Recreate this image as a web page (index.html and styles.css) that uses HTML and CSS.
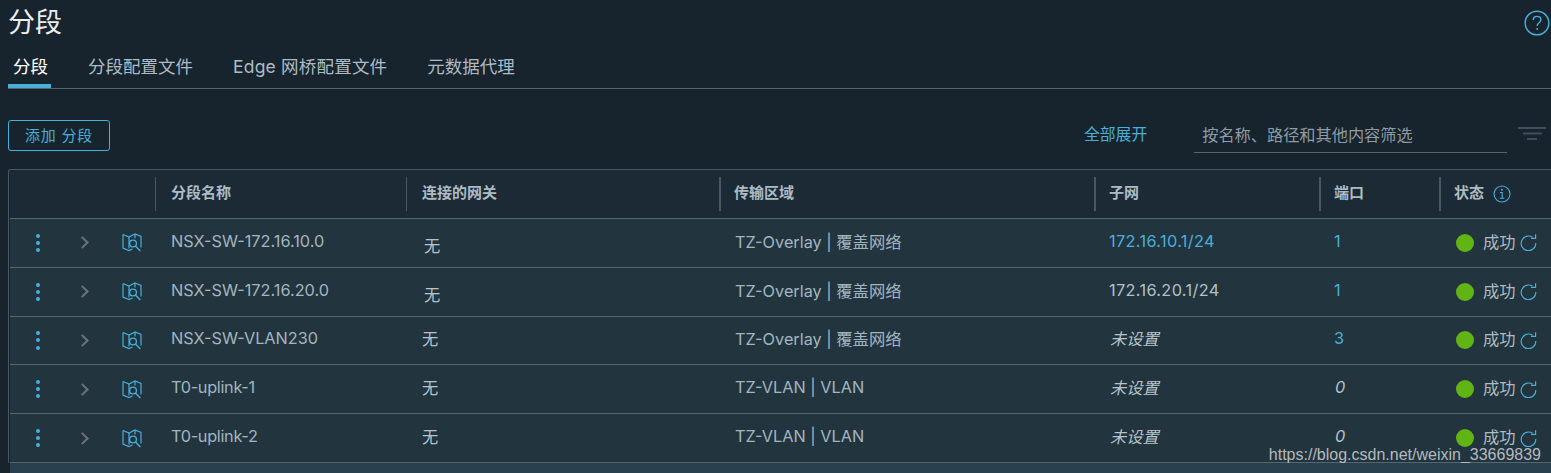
FILE: index.html
```html
<!DOCTYPE html>
<html lang="zh-CN">
<head>
    <meta charset="UTF-8">
    <title>分段</title>
    <link rel="stylesheet" href="styles.css">
</head>
<body>
    <svg class="icon-defs" width="0" height="0">
        <symbol id="map" viewBox="0 0 20 19">
            <path d="M7 15.500 7 4M13 1v4.500" fill="none" stroke="currentColor" stroke-width="1.200"/>
            <path d="M1 1.500 7 4l6-3 6 2.500V14.500M10.500 16 7 17.500 1 15V1.500" fill="none" stroke="currentColor" stroke-width="1.200"/>
            <circle cx="11" cy="10.500" r="3.400" fill="none" stroke="currentColor" stroke-width="1.300"/>
            <path d="m13.400 13 5 5" fill="none" stroke="currentColor" stroke-width="1.400"/>
        </symbol>
        <symbol id="refresh" viewBox="0 0 17 17">
            <path d="M12.600 3.300A7.300 7.300 0 1 0 15.800 9" fill="none" stroke="currentColor" stroke-width="1.200"/>
            <path d="M11 4.300h4.600V0.300" fill="none" stroke="currentColor" stroke-width="1.200"/>
        </symbol>
    </svg>

    <header class="title-bar">
        <h1>分段</h1>
        <svg class="help-icon" width="26" height="26" viewBox="0 0 27 27">
            <circle cx="13.500" cy="13.500" r="12.300" fill="none" stroke="currentColor" stroke-width="1.500"/>
            <path d="M9.600 10.400c0-2.400 1.800-3.800 4-3.800s3.900 1.400 3.900 3.500c0 3.100-3.800 3.200-3.800 6.400" fill="none" stroke="currentColor" stroke-width="1.500"/>
            <circle cx="13.700" cy="19.800" r="1" fill="currentColor"/>
        </svg>
    </header>

    <nav class="tabs">
        <a class="tab active">分段</a>
        <a class="tab">分段配置文件</a>
        <a class="tab wide">Edge 网桥配置文件</a>
        <a class="tab">元数据代理</a>
    </nav>

    <div class="toolbar">
        <button class="add-btn">添加 分段</button>
        <a class="expand-all">全部展开</a>
        <div class="filter-input">按名称、路径和其他内容筛选</div>
        <svg class="filter-icon" width="28" height="13" viewBox="0 0 28 13">
            <path d="M0 1h28M5 6.500h19M9 12h10" stroke="currentColor" stroke-width="2"/>
        </svg>
    </div>

    <div class="datagrid">
        <div class="row head">
            <div></div><div></div><div></div>
            <div class="th">分段名称</div>
            <div class="th">连接的网关</div>
            <div class="th thick">传输区域</div>
            <div class="th thick">子网</div>
            <div class="th thick">端口</div>
            <div class="th thick">状态
                <svg class="info-icon" width="18" height="18" viewBox="0 0 18 18">
                    <circle cx="9" cy="9" r="8" fill="none" stroke="currentColor" stroke-width="1.100"/>
                    <path d="M7 7.500h2.200V13M6.800 13.300h4.400" fill="none" stroke="currentColor" stroke-width="1.100"/>
                    <circle cx="8.800" cy="4.800" r="1" fill="currentColor"/>
                </svg>
            </div>
        </div>

        <div class="row">
            <div class="cell-icon"><span class="dots"><i></i><i></i><i></i></span></div>
            <div class="cell-icon"><span class="chevron"></span></div>
            <div class="cell-icon"><svg class="map-icon"><use href="#map"/></svg></div>
            <div class="td">NSX-SW-172.16.10.0</div>
            <div class="td none shifted">无</div>
            <div class="td">TZ-Overlay | 覆盖网络</div>
            <div class="td link ip">172.16.10.1/24</div>
            <div class="td link">1</div>
            <div class="td status"><span class="dot"></span><span class="status-text">成功</span><svg class="refresh-icon"><use href="#refresh"/></svg></div>
        </div>

        <div class="row">
            <div class="cell-icon"><span class="dots"><i></i><i></i><i></i></span></div>
            <div class="cell-icon"><span class="chevron"></span></div>
            <div class="cell-icon"><svg class="map-icon"><use href="#map"/></svg></div>
            <div class="td">NSX-SW-172.16.20.0</div>
            <div class="td none shifted">无</div>
            <div class="td">TZ-Overlay | 覆盖网络</div>
            <div class="td strong ip">172.16.20.1/24</div>
            <div class="td link">1</div>
            <div class="td status"><span class="dot"></span><span class="status-text">成功</span><svg class="refresh-icon"><use href="#refresh"/></svg></div>
        </div>

        <div class="row">
            <div class="cell-icon"><span class="dots"><i></i><i></i><i></i></span></div>
            <div class="cell-icon"><span class="chevron"></span></div>
            <div class="cell-icon"><svg class="map-icon"><use href="#map"/></svg></div>
            <div class="td">NSX-SW-VLAN230</div>
            <div class="td none">无</div>
            <div class="td">TZ-Overlay | 覆盖网络</div>
            <div class="td unset">未设置</div>
            <div class="td link">3</div>
            <div class="td status"><span class="dot"></span><span class="status-text">成功</span><svg class="refresh-icon"><use href="#refresh"/></svg></div>
        </div>

        <div class="row">
            <div class="cell-icon"><span class="dots"><i></i><i></i><i></i></span></div>
            <div class="cell-icon"><span class="chevron"></span></div>
            <div class="cell-icon"><svg class="map-icon"><use href="#map"/></svg></div>
            <div class="td narrow">T0-uplink-1</div>
            <div class="td none">无</div>
            <div class="td">TZ-VLAN | VLAN</div>
            <div class="td unset">未设置</div>
            <div class="td unset">0</div>
            <div class="td status"><span class="dot"></span><span class="status-text">成功</span><svg class="refresh-icon"><use href="#refresh"/></svg></div>
        </div>

        <div class="row">
            <div class="cell-icon"><span class="dots"><i></i><i></i><i></i></span></div>
            <div class="cell-icon"><span class="chevron"></span></div>
            <div class="cell-icon"><svg class="map-icon"><use href="#map"/></svg></div>
            <div class="td narrow">T0-uplink-2</div>
            <div class="td none">无</div>
            <div class="td">TZ-VLAN | VLAN</div>
            <div class="td unset">未设置</div>
            <div class="td unset">0</div>
            <div class="td status"><span class="dot"></span><span class="status-text">成功</span><svg class="refresh-icon"><use href="#refresh"/></svg></div>
        </div>
    </div>

    <div class="watermark">https://blog.csdn.net/weixin_33669839</div>
</body>
</html>
```

FILE: styles.css
```css
* {
    margin: 0;
    padding: 0;
    box-sizing: border-box;
}

html, body {
    height: 473px;
    overflow: hidden;
}

body {
    background: #17242e;
    color: #adbbc4;
    font-family: Inter, "Noto Sans CJK SC", sans-serif;
    font-size: 16px;
    padding-left: 8px;
    position: relative;
}

.icon-defs {
    position: absolute;
}

/* Title */
.title-bar {
    display: flex;
    justify-content: space-between;
    height: 47px;
    padding-top: 9px;
}

h1 {
    color: #eaedf0;
    font-size: 27px;
    font-weight: 400;
    line-height: 28px;
}

.help-icon {
    color: #49afd9;
    margin: 1px 1px 0 0;
}

/* Tabs */
.tabs {
    display: flex;
    gap: 40px;
    height: 42px;
    border-bottom: 1px solid #56666f;
    margin-bottom: 31px;
}

.tab {
    color: #adbbc4;
    font-size: 17.500px;
    line-height: 40px;
    height: 41px;
}

.tab.wide {
    letter-spacing: 0.200px;
}

.tab.active {
    color: #fff;
    border-bottom: 4px solid #49afd9;
    padding: 0 2px 0 5px;
    width: 43px;
    margin-right: -3px;
    white-space: nowrap;
}

/* Toolbar */
.toolbar {
    display: flex;
    align-items: center;
    height: 33px;
    margin-bottom: 16px;
}

.add-btn {
    align-self: flex-start;
    width: 102px;
    height: 31px;
    padding-bottom: 2px;
    background: none;
    border: 1px solid #49afd9;
    border-radius: 3px;
    color: #49afd9;
    font: inherit;
    font-size: 15px;
    letter-spacing: 0.800px;
}

.expand-all {
    color: #49afd9;
    margin-left: 974px;
    padding-bottom: 6px;
    font-size: 15.800px;
}

.filter-input {
    width: 313px;
    height: 33px;
    margin-left: 47px;
    padding: 2px 8px 0;
    border-bottom: 1px solid #56666f;
    color: #8f9ba3;
    font-size: 16.200px;
}

.filter-icon {
    color: #3f4e58;
    margin: 0 0 7px 11px;
}

/* Data grid */
.datagrid {
    width: 1560px;
    border: 1px solid #485862;
    border-right: none;
    border-bottom: none;
    border-radius: 3px 0 0 0;
    padding-left: 1px;
    background: #17242e;
}

.row {
    display: grid;
    grid-template-columns: 51px 47px 47px 251px 313px 375px 225px 120px 1fr;
    align-items: center;
    height: 48.800px;
    background: #22343d;
    border-bottom: 1px solid #56666f;
}

.row.head {
    background: #1b2a35;
    height: 49px;
}

.th {
    display: flex;
    align-items: center;
    height: 34px;
    padding: 0 0 5px 15px;
    border-left: 1px solid #485862;
    font-size: 15px;
    font-weight: 700;
    color: #adbbc4;
}

.th.thick {
    border-left-width: 2px;
    padding-left: 13px;
}

.info-icon {
    color: #49afd9;
    margin: 5px 0 0 9px;
}

.cell-icon {
    display: flex;
    justify-content: center;
    align-items: center;
}

.td {
    padding: 0 0 4px 16px;
    font-size: 16.300px;
    color: #a3b5c1;
    white-space: nowrap;
}

.td.narrow {
    letter-spacing: -0.300px;
}

.td.link {
    color: #49afd9;
    padding-left: 15px;
}

.td.strong {
    color: #b2c0c9;
    padding-left: 15px;
}

.td.ip {
    letter-spacing: 0.350px;
}

.td.unset {
    font-style: italic;
    color: #b5c3cc;
}

.td.none {
    color: #b5c3cc;
}

/* first two rows sit a little lower in the source */
.td.shifted {
    padding-left: 18px;
    padding-top: 4px;
    padding-bottom: 0;
}

.td.status {
    display: flex;
    align-items: center;
    padding: 0 0 0 17px;
    color: #adbbc4;
}

.status-text {
    padding-bottom: 4px;
}

.dot {
    width: 18px;
    height: 18px;
    border-radius: 50%;
    background: #60b515;
    margin-right: 9px;
}

.refresh-icon {
    width: 17px;
    height: 17px;
    color: #49afd9;
    margin-left: 4px;
}

.dots {
    display: flex;
    flex-direction: column;
    gap: 3.200px;
    margin-left: 5px;
}

.dots i {
    width: 4px;
    height: 4px;
    border-radius: 50%;
    background: #49afd9;
}

.chevron {
    width: 9px;
    height: 9px;
    border-top: 2px solid #6b7378;
    border-right: 2px solid #6b7378;
    transform: rotate(45deg);
    margin-right: 4px;
}

.map-icon {
    width: 20px;
    height: 19px;
    color: #49afd9;
}

.watermark {
    position: absolute;
    right: 10px;
    top: 446px;
    font-family: "Liberation Sans", sans-serif;
    font-size: 16px;
    color: #b3babf;
}

/* strip below the last row */
body::after {
    content: "";
    position: absolute;
    left: 10px;
    right: 0;
    top: 463px;
    height: 10px;
    background: #29404f;
}
```
